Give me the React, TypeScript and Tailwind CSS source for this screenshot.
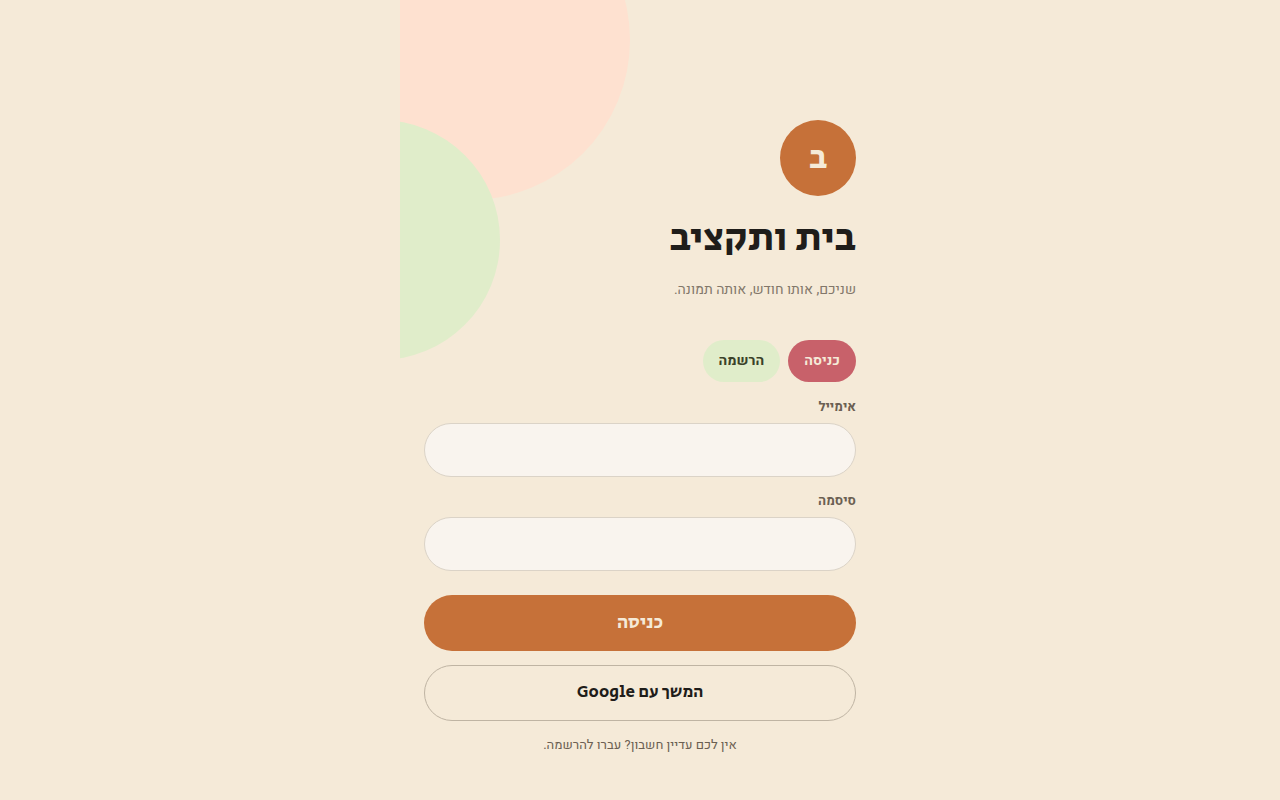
import React, { useState } from 'react';

type Mode = 'login' | 'signup';

const tabs: { id: Mode; label: string }[] = [
  { id: 'login', label: 'כניסה' },
  { id: 'signup', label: 'הרשמה' },
];

interface FieldProps {
  id: string;
  label: string;
  type: string;
  value: string;
  onChange: (value: string) => void;
}

const Field: React.FC<FieldProps> = ({ id, label, type, value, onChange }) => (
  <div className="flex flex-col gap-2">
    <label htmlFor={id} className="text-[13px] leading-4 font-bold text-[#6b5f52]">
      {label}
    </label>
    <input
      id={id}
      type={type}
      value={value}
      onChange={(e) => onChange(e.target.value)}
      className="h-[54px] w-full rounded-full border border-[#dbd3c7] bg-[#f9f4ee] px-5 text-base text-[#1f1d1a] outline-none focus:border-[#c67139]"
    />
  </div>
);

export default function App() {
  const [mode, setMode] = useState<Mode>('login');
  const [email, setEmail] = useState('');
  const [password, setPassword] = useState('');

  const isLogin = mode === 'login';

  return (
    <div dir="rtl" className="min-h-screen bg-[#f5ead8] font-['Heebo','Open_Sans',sans-serif] text-[#1f1d1a]">
      <main className="relative mx-auto min-h-screen max-w-[480px] overflow-hidden px-6 pt-[120px] pb-10">
        <div className="absolute -top-[120px] -left-[90px] size-80 rounded-full bg-[#fee1d0]" />
        <div className="absolute top-[120px] -left-[140px] size-60 rounded-full bg-[#e0edca]" />

        <div className="relative">
          <div className="flex size-[76px] items-center justify-center rounded-full bg-[#c67139] font-['Secular_One','Open_Sans',sans-serif] text-[34px] text-[#f5ead8]">
            ב
          </div>
          <h1 className="mt-5 font-['Secular_One','Open_Sans',sans-serif] text-[40px] leading-11 font-normal">בית ותקציב</h1>
          <p className="mt-[18px] text-sm leading-6 text-[#82776a]">שניכם, אותו חודש, אותה תמונה.</p>

          <div className="mt-[38px] flex gap-2">
            {tabs.map((tab) => (
              <button
                key={tab.id}
                type="button"
                onClick={() => setMode(tab.id)}
                className={`h-[42px] rounded-full px-4 text-sm font-bold ${mode === tab.id ? 'bg-[#c8616a] text-[#f5ead8]' : 'bg-[#e0edca] text-[#3a4229]'}`}
              >
                {tab.label}
              </button>
            ))}
          </div>

          <form className="mt-[17px] flex flex-col gap-4" onSubmit={(e) => e.preventDefault()}>
            <Field id="email" label="אימייל" type="email" value={email} onChange={setEmail} />
            <Field id="password" label="סיסמה" type="password" value={password} onChange={setPassword} />
            <button
              type="submit"
              className="mt-2 h-14 rounded-full bg-[#c67139] font-['Secular_One','Open_Sans',sans-serif] text-[19px] text-[#f5ead8]"
            >
              {isLogin ? 'כניסה' : 'הרשמה'}
            </button>
          </form>

          <button
            type="button"
            className="mt-[14px] h-14 w-full rounded-full border border-[#bfb4a3] font-['Secular_One','Open_Sans',sans-serif] text-[17px]"
          >
            המשך עם Google
          </button>
          <p className="mt-3 text-center text-[13px] leading-6 text-[#6b5f52]">
            {isLogin ? 'אין לכם עדיין חשבון? עברו להרשמה.' : 'כבר יש לכם חשבון? עברו לכניסה.'}
          </p>
        </div>
      </main>
    </div>
  );
}
